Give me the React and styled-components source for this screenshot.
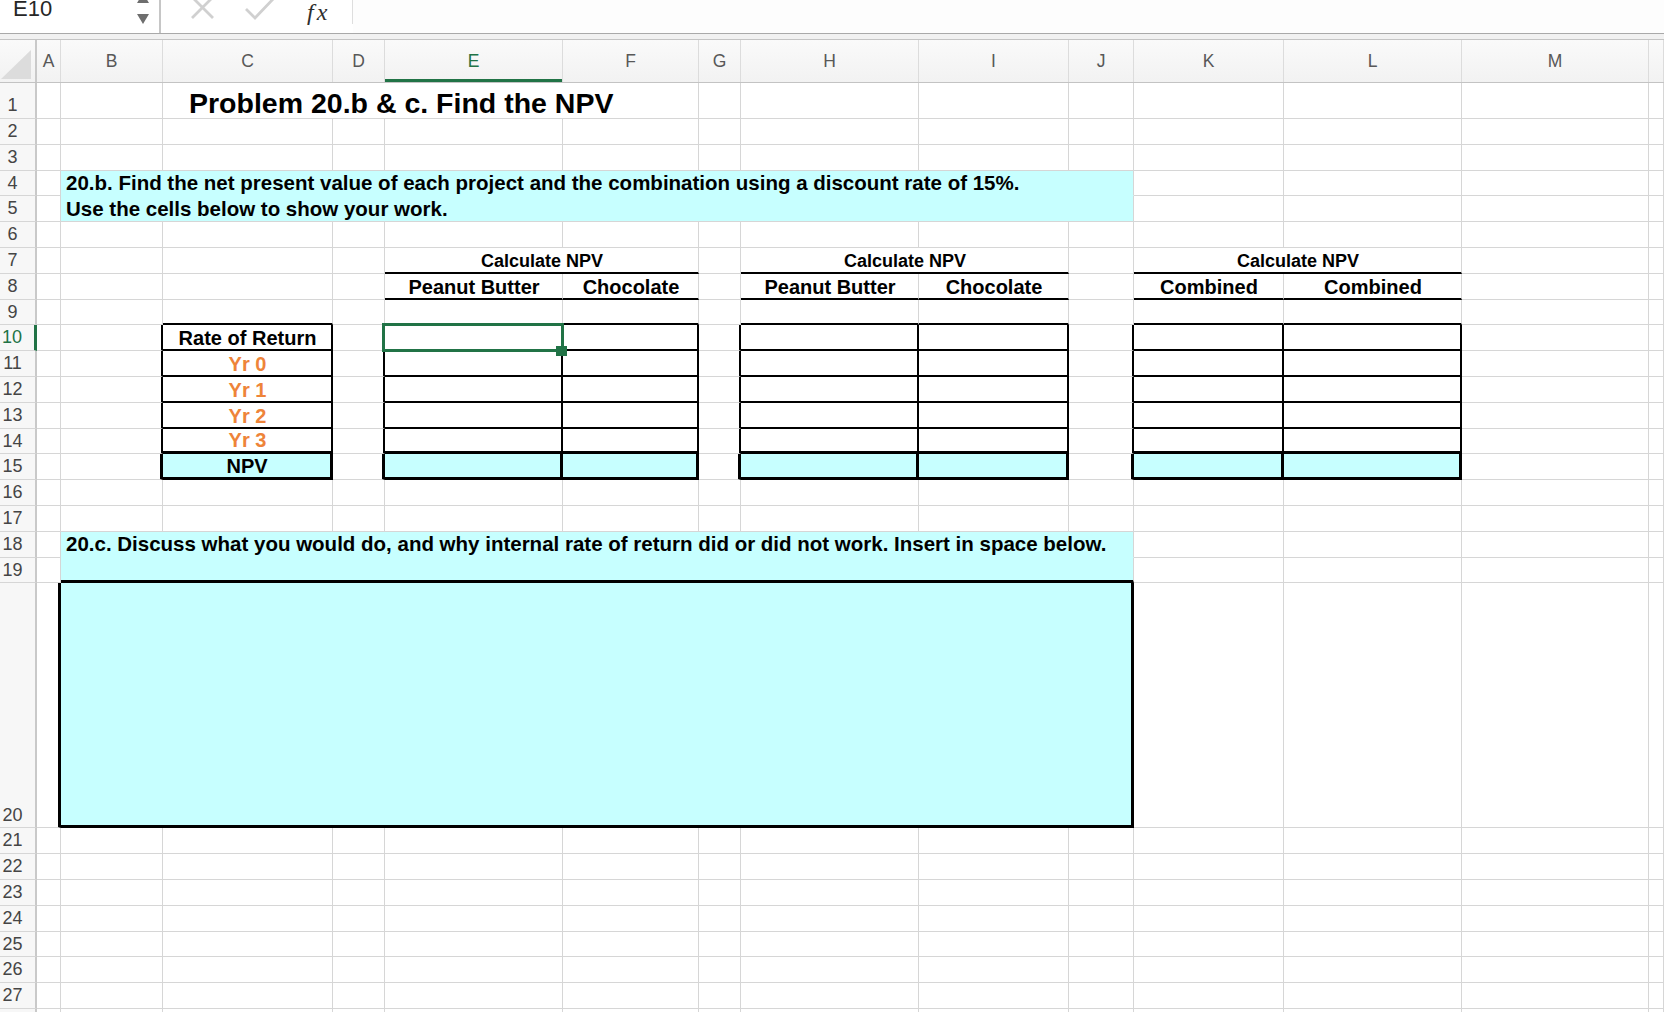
import React from 'react';
import styled, { createGlobalStyle } from 'styled-components';

const CYAN = '#c7ffff';
const ORANGE = '#ee8439';
const GREEN = '#217346';
const GRID = '#d6d6d6';

const COLUMNS = [
  ['A', 24],
  ['B', 102],
  ['C', 170],
  ['D', 52],
  ['E', 178],
  ['F', 136],
  ['G', 42],
  ['H', 178],
  ['I', 150],
  ['J', 65],
  ['K', 150],
  ['L', 178],
  ['M', 187],
  ['N', 0],
];
const TEMPLATE = `37px ${COLUMNS.map(([, w]) => (w ? `${w}px` : '1fr')).join(' ')}`;

const ROW_HEIGHTS = { 1: 36, 20: 245 };
const ROWS = Array.from({ length: 28 }, (_, i) => i + 1);

const PROJECT_COLS = ['E', 'F', 'H', 'I', 'K', 'L'];
// right border of these columns forms the left edge of a boxed block
const EDGE_COLS = ['B', 'D', 'G', 'J'];

function buildSpecs() {
  const specs = {};
  const set = (row, col, props) => {
    specs[row] = specs[row] || {};
    specs[row][col] = { ...(specs[row][col] || {}), ...props };
  };

  set(1, 'C', { span: 4, text: 'Problem 20.b & c. Find the NPV', size: 28.5, indent: 21 });
  set(4, 'B', {
    span: 9,
    fill: CYAN,
    b: 'hide',
    size: 20.5,
    pad: 2,
    text: '20.b. Find the net present value of each project and the combination using a discount rate of 15%.',
  });
  set(5, 'B', { span: 9, fill: CYAN, size: 20.5, pad: 2, text: 'Use the cells below to show your work.' });

  ['E', 'H', 'K'].forEach((col) =>
    set(7, col, { span: 2, text: 'Calculate NPV', size: 18, pad: 2, align: 'center', b: 'thin' })
  );
  [
    ['E', 'Peanut Butter'],
    ['F', 'Chocolate'],
    ['H', 'Peanut Butter'],
    ['I', 'Chocolate'],
    ['K', 'Combined'],
    ['L', 'Combined'],
  ].forEach(([col, text]) => set(8, col, { text, align: 'center', b: 'thin' }));
  ['C', ...PROJECT_COLS].forEach((col) => set(9, col, { b: 'thin' }));

  const labels = ['Rate of Return', 'Yr 0', 'Yr 1', 'Yr 2', 'Yr 3'];
  for (let r = 10; r <= 14; r++) {
    const under = r === 14 ? 'thick' : 'thin';
    EDGE_COLS.forEach((col) => set(r, col, { r: 'thin' }));
    set(r, 'C', {
      r: 'thin',
      b: under,
      text: labels[r - 10],
      align: 'center',
      color: r > 10 ? ORANGE : undefined,
    });
    PROJECT_COLS.forEach((col) => set(r, col, { r: 'thin', b: under }));
  }
  EDGE_COLS.forEach((col) => set(15, col, { r: 'thick' }));
  set(15, 'C', { r: 'thick', b: 'thick', fill: CYAN, text: 'NPV', align: 'center' });
  PROJECT_COLS.forEach((col) => set(15, col, { r: 'thick', b: 'thick', fill: CYAN }));
  set(10, 'E', { selected: true });

  set(18, 'B', {
    span: 9,
    fill: CYAN,
    b: 'hide',
    size: 20.5,
    pad: 2,
    text: '20.c. Discuss what you would do, and why internal rate of return did or did not work. Insert in space below.',
  });
  set(19, 'B', { span: 9, fill: CYAN, b: 'thick' });
  set(20, 'A', { r: 'thick' });
  set(20, 'B', { span: 9, fill: CYAN, r: 'thick', b: 'thick' });
  return specs;
}

const SPECS = buildSpecs();

const GlobalStyle = createGlobalStyle`
  *, *::before, *::after { box-sizing: border-box; }
  html, body {
    margin: 0;
    background: #fff;
    overflow: hidden;
    font-family: 'Liberation Sans', Arial, sans-serif;
  }
`;

const Page = styled.div`
  width: 1664px;
  height: 1012px;
  overflow: hidden;
  background: #fff;
`;

const FormulaBar = styled.div`
  display: flex;
  height: 34px;
  overflow: hidden;
  border-bottom: 1px solid #a9a9a9;
  background: #fff;
`;

const NameBox = styled.div`
  width: 161px;
  display: flex;
  justify-content: space-between;
  align-items: flex-start;
  padding: 0 9px 0 13px;
  border-right: 2px solid #c6c6c6;
  font: 22px/1 'Liberation Sans', Arial, sans-serif;
  color: #262626;

  span {
    margin-top: -2px;
  }
`;

const FormulaTools = styled.div`
  position: relative;
  width: 192px;
  display: flex;
  align-items: flex-start;
  gap: 31px;
  padding-left: 30px;

  &::after {
    content: '';
    position: absolute;
    right: 0;
    top: 0;
    width: 1px;
    height: 24px;
    background: #dedede;
  }
`;

const Fx = styled.span`
  font: italic 24px/1 'Liberation Serif', 'Times New Roman', serif;
  color: #2e2e2e;
  letter-spacing: 3px;
`;

const FormulaInput = styled.div`
  flex: 1;
  background: #fdfdfd;
`;

const Divider = styled.div`
  height: 6px;
  background: #f1f1f1;
  border-bottom: 1px solid #c4c4c4;
`;

const ColumnHeaders = styled.div`
  display: grid;
  grid-template-columns: ${TEMPLATE};
  height: 43px;
  background: linear-gradient(#fafafa, #f2f2f2);
  border-bottom: 1px solid #c3c3c3;
`;

const Corner = styled.div`
  border-right: 2px solid #c9c9c9;
  display: flex;
  align-items: flex-end;
  justify-content: flex-end;
  padding: 0 4px 3px 0;
`;

const HeaderCell = styled.div`
  display: flex;
  align-items: center;
  justify-content: center;
  font: 17.5px/1 'Liberation Sans', Arial, sans-serif;
  color: ${(p) => (p.$active ? GREEN : '#585858')};
  border-right: 1px solid #dcdcdc;
  box-shadow: ${(p) => (p.$active ? `inset 0 -3px 0 ${GREEN}` : 'none')};
  padding-top: 2px;
`;

const Row = styled.div`
  display: grid;
  grid-template-columns: ${TEMPLATE};
  height: ${(p) => p.$h}px;
`;

const RowHead = styled.div`
  display: flex;
  align-items: flex-end;
  justify-content: center;
  padding: 0 10px 2px 0;
  font: 18px/1.1 'Liberation Sans', Arial, sans-serif;
  color: ${(p) => (p.$active ? GREEN : '#454545')};
  background: #f7f7f7;
  border-right: ${(p) => (p.$active ? `3px solid ${GREEN}` : '2px solid #c9c9c9')};
  border-bottom: 1px solid ${GRID};
`;

const edge = (kind, fill) => {
  if (kind === 'thick') return '3px solid #000';
  if (kind === 'thin') return '2px solid #000';
  if (kind === 'hide') return `1px solid ${fill}`;
  return `1px solid ${GRID}`;
};

const Cell = styled.div`
  grid-column: span ${(p) => p.$span};
  position: ${(p) => (p.$selected ? 'relative' : 'static')};
  display: flex;
  align-items: flex-end;
  justify-content: ${(p) => (p.$align === 'center' ? 'center' : 'flex-start')};
  min-width: 0;
  padding: 0 4px ${(p) => p.$pad}px ${(p) => 5 + p.$indent}px;
  background: ${(p) => p.$fill};
  border-right: ${(p) => edge(p.$r, p.$fill)};
  border-bottom: ${(p) => edge(p.$b, p.$fill)};
  white-space: nowrap;
  font-family: 'Liberation Sans', Arial, sans-serif;
  font-weight: bold;
  font-size: ${(p) => p.$size}px;
  line-height: 1;
  color: ${(p) => p.$color};
`;

const Selection = styled.span`
  position: absolute;
  top: -2px;
  left: -3px;
  right: -3px;
  bottom: -3px;
  border: 3px solid ${GREEN};
  z-index: 2;
`;

const FillHandle = styled.span`
  position: absolute;
  right: -6px;
  bottom: -7px;
  width: 11px;
  height: 10px;
  background: ${GREEN};
`;

function Spinner() {
  return (
    <svg width="14" height="26" viewBox="0 0 14 26">
      <polygon points="1,3 13,3 7,-7" fill="#6e6e6e" />
      <polygon points="1,14 13,14 7,24" fill="#6e6e6e" />
    </svg>
  );
}

function CancelIcon() {
  return (
    <svg width="23" height="20" viewBox="0 0 23 20" style={{ overflow: 'visible' }}>
      <path d="M1 -3 L22 18 M22 -3 L1 18" stroke="#d0d0d0" strokeWidth="2.8" fill="none" />
    </svg>
  );
}

function EnterIcon() {
  return (
    <svg width="31" height="20" viewBox="0 0 31 20" style={{ overflow: 'visible' }}>
      <path d="M1 9 L10 18 L30 -3" stroke="#d0d0d0" strokeWidth="2.8" fill="none" />
    </svg>
  );
}

function CornerMark() {
  return (
    <svg width="30" height="29" viewBox="0 0 30 29">
      <polygon points="0,29 30,29 30,0" fill="#dcdcdc" />
    </svg>
  );
}

function SheetRow({ n }) {
  const specs = SPECS[n] || {};
  const cells = [];
  for (let i = 0; i < COLUMNS.length; ) {
    const col = COLUMNS[i][0];
    const s = specs[col] || {};
    const span = s.span || 1;
    cells.push(
      <Cell
        key={col}
        $span={span}
        $fill={s.fill || '#fff'}
        $r={s.r}
        $b={s.b}
        $align={s.align}
        $size={s.size || 20}
        $pad={s.pad ?? 1}
        $indent={s.indent || 0}
        $color={s.color || '#000'}
        $selected={s.selected}
      >
        {s.text}
        {s.selected && (
          <Selection>
            <FillHandle />
          </Selection>
        )}
      </Cell>
    );
    i += span;
  }
  return (
    <Row $h={ROW_HEIGHTS[n] || 25.8}>
      <RowHead $active={n === 10}>{n}</RowHead>
      {cells}
    </Row>
  );
}

export default function App() {
  return (
    <Page>
      <GlobalStyle />
      <FormulaBar>
        <NameBox>
          <span>E10</span>
          <Spinner />
        </NameBox>
        <FormulaTools>
          <CancelIcon />
          <EnterIcon />
          <Fx>fx</Fx>
        </FormulaTools>
        <FormulaInput />
      </FormulaBar>
      <Divider />
      <ColumnHeaders>
        <Corner>
          <CornerMark />
        </Corner>
        {COLUMNS.map(([key]) => (
          <HeaderCell key={key} $active={key === 'E'}>
            {key === 'N' ? '' : key}
          </HeaderCell>
        ))}
      </ColumnHeaders>
      {ROWS.map((n) => (
        <SheetRow key={n} n={n} />
      ))}
    </Page>
  );
}
